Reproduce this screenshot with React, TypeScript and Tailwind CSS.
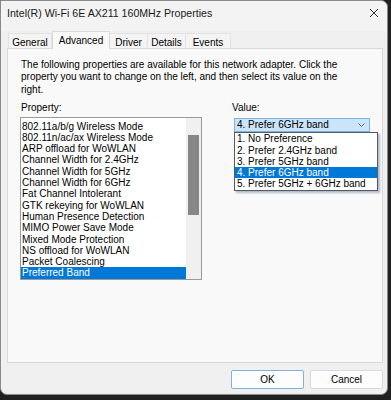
import React from 'react';

const properties = [
    '802.11a/b/g Wireless Mode',
    '802.11n/ac/ax Wireless Mode',
    'ARP offload for WoWLAN',
    'Channel Width for 2.4GHz',
    'Channel Width for 5GHz',
    'Channel Width for 6GHz',
    'Fat Channel Intolerant',
    'GTK rekeying for WoWLAN',
    'Human Presence Detection',
    'MIMO Power Save Mode',
    'Mixed Mode Protection',
    'NS offload for WoWLAN',
    'Packet Coalescing',
    'Preferred Band',
];

const bands = [
    '1. No Preference',
    '2. Prefer 2.4GHz band',
    '3. Prefer 5GHz band',
    '4. Prefer 6GHz band',
    '5. Prefer 5GHz + 6GHz band',
];

export default function App() {
    return (
        <div className="w-[391px] h-[400px] bg-[#202020] overflow-hidden font-['Liberation_Sans',Arial,sans-serif] text-black">
            <div className="w-[388px] h-[395px] bg-[#f0f0f0] border border-[#8a8a8a] rounded-tr-[7px] rounded-b-[7px] flex flex-col">
                {/* Title bar */}
                <div className="h-[30px] bg-[#f3f3f3] rounded-tr-[7px] flex items-start pt-[4px] pl-[6px] pr-[8px]">
                    <span className="text-[10.6px] leading-[16px] text-[#1a1a1a] whitespace-nowrap">
                        Intel(R) Wi-Fi 6E AX211 160MHz Properties
                    </span>
                    <svg className="ml-auto mt-[3px]" width="10" height="10" viewBox="0 0 10 10">
                        <path d="M1 1 L9 9 M9 1 L1 9" stroke="#333" strokeWidth="1" />
                    </svg>
                </div>

                {/* Tabs */}
                <div className="h-[17px] flex items-end pl-[7px] text-[10px]">
                    <div className="w-[44px] h-[15px] flex items-center justify-center pt-[2px] bg-[#f4f4f4] border border-b-0 border-[#e2e2e2]">General</div>
                    <div className="relative z-10 w-[58px] h-[18px] mb-[-1px] flex items-center justify-center pb-[1px] bg-[#f9f9f9] border border-b-0 border-[#d9d9d9]">Advanced</div>
                    <div className="w-[38px] h-[15px] flex items-center justify-center pt-[2px] bg-[#f4f4f4] border border-b-0 border-l-0 border-[#e2e2e2]">Driver</div>
                    <div className="w-[38px] h-[15px] flex items-center justify-center pt-[2px] bg-[#f4f4f4] border border-b-0 border-l-0 border-[#e2e2e2]">Details</div>
                    <div className="w-[45px] h-[15px] flex items-center justify-center pt-[2px] bg-[#f4f4f4] border border-b-0 border-l-0 border-[#e2e2e2]">Events</div>
                </div>

                {/* Panel */}
                <div className="ml-[6px] w-[376px] h-[315px] bg-[#f9f9f9] border border-[#d9d9d9] pl-[12px] text-[10px]">
                    <p className="pt-[10px] pl-[1px] leading-[12.4px] whitespace-nowrap">
                        The following properties are available for this network adapter. Click the<br />
                        property you want to change on the left, and then select its value on the<br />
                        right.
                    </p>

                    <div className="mt-[6px] flex">
                        {/* Property list */}
                        <div className="w-[182px]">
                            <div className="pl-[1px] leading-[12px]">Property:</div>
                            <div className="mt-[3px] h-[163px] bg-white border border-[#9a9a9a] flex">
                                <div className="flex-1 pt-[2.35px]">
                                    {properties.map((p, i) => (
                                        <div
                                            key={p}
                                            className={
                                                i === properties.length - 1
                                                    ? 'h-[11.3px] leading-[11.3px] pl-[1px] bg-[#0078d7] text-white whitespace-nowrap'
                                                    : 'h-[11.3px] leading-[11.3px] pl-[1px] whitespace-nowrap'
                                            }
                                        >
                                            {p}
                                        </div>
                                    ))}
                                </div>
                                <div className="w-[15px] bg-[#f0f0f0] flex flex-col">
                                    <div className="h-[17px]" />
                                    <div className="ml-[2px] w-[11px] h-[80px] bg-[#878787]" />
                                </div>
                            </div>
                        </div>

                        {/* Value */}
                        <div className="ml-[30px]">
                            <div className="leading-[12px]">Value:</div>
                            <div className="relative ml-[2px] mt-[4px] w-[136px] h-[14px] bg-[#cce4f7] border border-[#7ab4e8] flex items-center pl-[2px] pr-[4px]">
                                <span className="leading-[12px] whitespace-nowrap">4. Prefer 6GHz band</span>
                                <svg className="ml-auto" width="7" height="4" viewBox="0 0 7 4">
                                    <path d="M0.5 0.5 L3.5 3.5 L6.5 0.5" fill="none" stroke="#666" strokeWidth="1" />
                                </svg>

                                {/* Open dropdown */}
                                <div className="absolute left-[-1px] top-[13px] w-[144px] h-[59px] bg-white border border-[#5a5a5a] shadow-[2px_2px_2px_rgba(0,40,90,0.3)] z-20">
                                    {bands.map((b, i) => (
                                        <div
                                            key={b}
                                            className={
                                                i === 3
                                                    ? 'h-[11.3px] leading-[11.3px] pl-[2px] bg-[#0078d7] text-white whitespace-nowrap'
                                                    : 'h-[11.3px] leading-[11.3px] pl-[2px] whitespace-nowrap'
                                            }
                                        >
                                            {b}
                                        </div>
                                    ))}
                                </div>
                            </div>
                        </div>
                    </div>
                </div>

                {/* Buttons */}
                <div className="mt-[7px] flex justify-end gap-[6px] pr-[4px] text-[10px]">
                    <button className="w-[73px] h-[19px] bg-[#fdfdfd] border border-[#7eb0e0] rounded-[2px]">OK</button>
                    <button className="w-[73px] h-[19px] bg-[#fdfdfd] border border-[#dadada] rounded-[2px]">Cancel</button>
                </div>
            </div>
        </div>
    );
}
